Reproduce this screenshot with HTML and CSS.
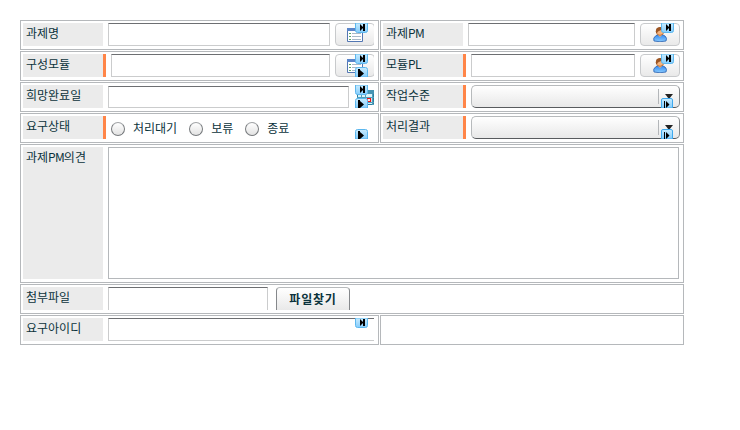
FILE: index.html
```html
<!DOCTYPE html>
<html lang="ko">
<head>
<meta charset="utf-8">
<title>요구사항</title>
<link rel="stylesheet" href="styles.css">
</head>
<body>
<svg class="defs" width="0" height="0">
  <defs>
    <linearGradient id="blue" x1="0" y1="0" x2="0" y2="1"><stop offset="0" stop-color="#c9ecff"/><stop offset="1" stop-color="#84ccfb"/></linearGradient>
    <linearGradient id="shirt" x1="0" y1="0" x2="0" y2="1"><stop offset="0" stop-color="#2f86f0"/><stop offset="1" stop-color="#8accff"/></linearGradient>
    <symbol id="next" viewBox="0 0 13 10"><path d="M.5 0V7.500Q.5 9.500 2.500 9.500H10.500Q12.500 9.500 12.500 7.500V0Z" fill="url(#blue)" stroke="#5cb7ee"/><path d="M5 1L8 4V1H10V8H8V5L5 8Z" fill="#000"/></symbol>
    <symbol id="play" viewBox="0 0 13 10"><path d="M.5 10V2.500Q.5.5 2.500.5H10.500Q12.500.5 12.500 2.500V10Z" fill="url(#blue)" stroke="#5cb7ee"/><path d="M3 2H5V3L9 6.500L5 10H3Z" fill="#000"/></symbol>
    <symbol id="step" viewBox="0 0 12 10"><path d="M.5 10V2Q.5.5 2 .5H10Q11.500.5 11.500 2V10Z" fill="url(#blue)" stroke="#3fa9ee"/><path d="M3 3H4V10H3ZM5 3L8.500 6.500L5 10Z" fill="#000"/></symbol>
    <symbol id="list" viewBox="0 0 16 15"><path d="M.5.5H15.500V13.500H.5Z" fill="#fff" stroke="#5377b3"/><path d="M0 0H16V3H0Z" fill="#5a85c9"/><path d="M2 5.500H4M2 8.500H4M2 11.500H4" stroke="#5aa768"/><path d="M5 5.500H14M5 8.500H14M5 11.500H14" stroke="#a9b9c9"/></symbol>
    <symbol id="person" viewBox="0 0 14 15"><path d="M1 14Q-.5 11 3 8.500L6 7.500H9L12 9Q14.500 11 13 14Q7 15.500 1 14Z" fill="url(#shirt)" stroke="#285fae" stroke-width=".8"/><path d="M4.500 7.500L7 10L9.500 7.500Z" fill="#f2b27e"/><circle cx="7" cy="4.500" r="3.800" fill="#f5b47d" stroke="#a75d28" stroke-width=".7"/><path d="M3 6Q2 0 7 0T11 4L8 3L5 4.500L4 6Z" fill="#9c5523"/></symbol>
    <symbol id="calendar" viewBox="0 0 17 15"><path d="M.5.5H16.500V14.500H.5Z" fill="#d9f2fa" stroke="#2b7f9f"/><path d="M0 0H17V4H0Z" fill="#4794b3"/><path d="M4.500 4V15M8.500 4V15M15.500 4V15M0 7.500H17M0 12.500H17" stroke="#4f9fbd"/><path d="M10.500 8.500H13.500V11.500H10.500Z" fill="#fff" stroke="#f01414" stroke-width="1.200"/></symbol>
  </defs>
</svg>
<main class="form">
  <section class="cell"><label class="label">과제명</label><div class="body"><input class="field"><button class="icon-button"><svg class="list"><use href="#list"/></svg></button></div><svg class="next"><use href="#next"/></svg></section>
  <section class="cell"><label class="label">과제<span class="latin">PM</span></label><div class="body"><input class="field"><button class="icon-button"><svg class="person"><use href="#person"/></svg></button></div><svg class="next user-next"><use href="#next"/></svg></section>

  <section class="cell required"><label class="label">구성모듈</label><div class="body"><input class="field"><button class="icon-button"><svg class="list"><use href="#list"/></svg></button></div><svg class="next"><use href="#next"/></svg><svg class="play"><use href="#play"/></svg></section>
  <section class="cell required"><label class="label">모듈<span class="latin">PL</span></label><div class="body"><input class="field"><button class="icon-button"><svg class="person"><use href="#person"/></svg></button></div><svg class="next user-next"><use href="#next"/></svg></section>

  <section class="cell"><label class="label">희망완료일</label><div class="body date"><input class="field"><svg class="calendar"><use href="#calendar"/></svg></div><svg class="next"><use href="#next"/></svg><svg class="play"><use href="#play"/></svg></section>
  <section class="cell required"><label class="label">작업수준</label><div class="body"><div class="select"><span class="arrow"></span></div></div><svg class="step"><use href="#step"/></svg></section>

  <section class="cell required"><label class="label">요구상태</label><div class="body radios"><span class="radio"></span><span class="choice first">처리대기</span><span class="radio"></span><span class="choice second">보류</span><span class="radio"></span><span class="choice">종료</span></div><svg class="play"><use href="#play"/></svg></section>
  <section class="cell required"><label class="label">처리결과</label><div class="body"><div class="select"><span class="arrow"></span></div></div><svg class="step"><use href="#step"/></svg></section>

  <section class="cell wide opinion"><label class="label">과제<span class="latin">PM</span>의견</label><div class="body"><textarea class="text"></textarea></div></section>
  <section class="cell wide"><label class="label">첨부파일</label><div class="body file"><input class="field"><button class="file-button">파일찾기</button></div></section>
  <section class="cell"><label class="label">요구아이디</label><div class="body"><input class="field open"></div><svg class="next"><use href="#next"/></svg></section>
  <section class="cell"></section>
</main>
</body>
</html>
```
FILE: styles.css
```css
* { box-sizing: border-box; }
body {
  margin: 0;
  background: #fff;
  color: #0b333c;
  font: 12px/18px "Noto Sans CJK KR", sans-serif;
}
.defs { position: absolute; }
.form {
  display: grid;
  grid-template-columns: 359px 304px;
  grid-template-rows: repeat(4, 30px) 139px 30px 30px;
  gap: 1px;
  width: 664px;
  margin: 20px;
}
.cell {
  position: relative;
  display: flex;
  border: 1px solid #b5b8bb;
  padding: 2px;
}
.wide { grid-column: span 2; }
.label {
  flex: 0 0 80px;
  height: 23px;
  padding: 1px 3px;
  background: #ebebeb;
  white-space: nowrap;
}
.latin { letter-spacing: -0.8px; }
.required .label {
  flex-basis: 83px;
  border-right: 3px solid #ff8548;
}
.body {
  display: flex;
  flex: 1;
  gap: 5px;
  min-width: 0;
  height: 23px;
  margin-left: 5px;
  margin-right: 2px;
  overflow: hidden;
}
.cell:nth-child(even) .body { margin-right: 1px; }
.field, .text {
  flex: 1;
  min-width: 0;
  height: 23px;
  margin: 0;
  padding: 0;
  border: 1px solid #cbcccd;
  border-top-color: #6d6f72;
  border-radius: 0;
  background: #fff;
  outline: 0;
}
.icon-button, .file-button {
  flex: 0 0 40px;
  height: 23px;
  margin: 0;
  padding: 0;
  border: 1px solid #c8cacc;
  border-radius: 4px;
  background: linear-gradient(#fff, #e9e9e9);
}
.icon-button { display: flex; justify-content: center; align-items: center; }
.cell:nth-child(odd) .icon-button { margin-right: -1px; }
.list { width: 16px; height: 15px; margin-top: 2px; }
.person { width: 14px; height: 15px; }
.next { position: absolute; right: 10px; top: 2px; width: 13px; height: 10px; }
.user-next { right: 9px; }
.play { position: absolute; right: 10px; bottom: 3px; width: 13px; height: 10px; }
.step { position: absolute; right: 10px; bottom: 3px; width: 12px; height: 10px; }
.date { gap: 8px; }
.date .field { height: 22px; margin-top: 1px; }
.calendar { flex: 0 0 17px; width: 17px; height: 15px; margin-top: 5px; }
.select {
  display: flex;
  flex: 1;
  height: 23px;
  border: 1px solid #b7babc;
  border-bottom-color: #585b5e;
  border-right-color: #85888b;
  border-radius: 5px;
  background: linear-gradient(#fff, #e8e8e8);
}
.arrow {
  width: 21px;
  height: 15px;
  margin: 3px 0 0 auto;
  border-left: 1px solid #b3b6b9;
}
.arrow::before {
  content: "";
  display: block;
  margin: 5px 0 0 6px;
  width: 0;
  border: 4px solid transparent;
  border-top: 5px solid #222;
  border-bottom: 0;
}
.radios { align-items: center; gap: 0; padding-top: 3px; }
.radio {
  flex: 0 0 14px;
  height: 14px;
  border: 1px solid #777a7d;
  border-top-color: #a2a5a7;
  border-radius: 50%;
  background: linear-gradient(#fff, #e2e2e2);
}
.choice { margin: -2px 0 0 8px; }
.first { margin-right: 12px; }
.second { margin-right: 12px; }
.opinion .label, .opinion .body, .text { height: 132px; }
.text { display: block; resize: none; border-color: #b5b8bb; }
.cell.wide .body { margin-right: 2px; }
.file { gap: 8px; }
.file .field { flex: 0 0 160px; border-bottom: 0; }
.file-button {
  flex-basis: 74px;
  border-color: #b7babc #85888b #585b5e;
  border-bottom: 0;
  border-radius: 4px 4px 0 0;
  color: #0b333c;
  font: bold 12px/18px "Noto Sans CJK KR", sans-serif;
  letter-spacing: 0.8px;
}
.open { border-right: 0; }
```
